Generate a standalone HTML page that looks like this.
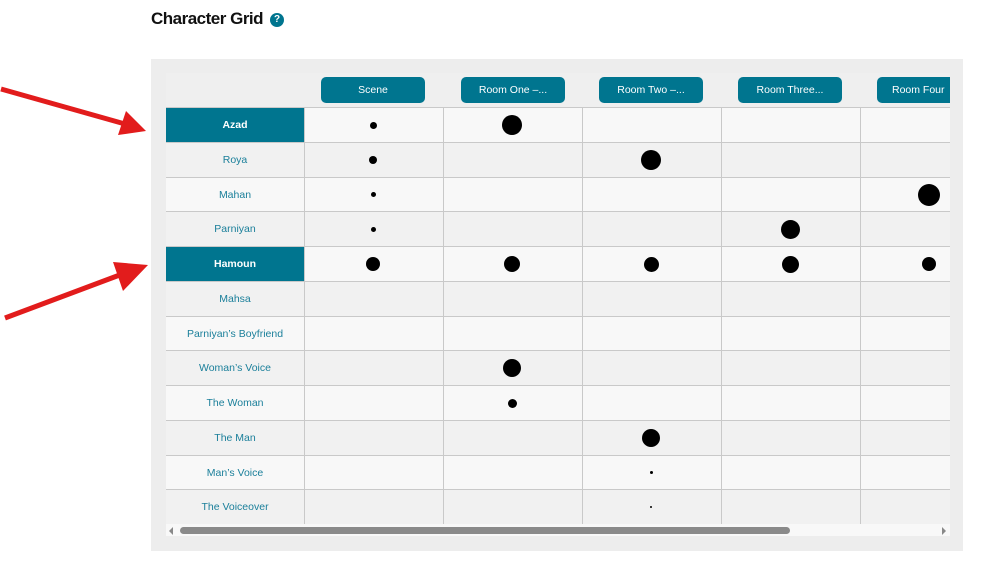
<!DOCTYPE html>
<html><head><style>
body{margin:0;width:1000px;height:574px;background:#fff;font-family:"Liberation Sans",sans-serif;position:relative;overflow:hidden}
.t{position:absolute;left:151px;top:9px;font-size:17px;font-weight:bold;color:#111;letter-spacing:-0.5px}
.q{position:absolute;left:270px;top:13px;width:14px;height:14px;border-radius:50%;background:#00758f;color:#fff;font-size:10px;font-weight:bold;text-align:center;line-height:14px}
.panel{position:absolute;left:151px;top:59px;width:812px;height:492px;background:#ededed}
.grid{position:absolute;left:166px;top:73px;width:784px;height:451px;overflow:hidden;background:#efefef}
.btn{position:absolute;top:4px;width:104px;height:26px;border-radius:5px;background:#00758f;color:#fff;font-size:10.5px;line-height:26px;text-align:center;white-space:nowrap;overflow:hidden}
.row{position:absolute;left:0;width:784px;height:35px;border-top:1px solid #c9c9c9;box-sizing:border-box}
.cell{position:absolute;top:0;height:34px;border-left:1px solid #c9c9c9;box-sizing:border-box}
.nm{position:absolute;left:0;top:0;width:138px;height:34px;line-height:34px;text-align:center;font-size:10.5px;color:#1a7f9a}
.nm.h{background:#00758f;color:#fff;font-weight:bold}
.d{position:absolute;border-radius:50%;background:#000}
.sb{position:absolute;left:166px;top:524px;width:784px;height:12px;background:#f8f8f8}
</style></head><body>
<div class="t">Character Grid</div><div class="q">?</div>
<div class="panel"></div>
<div class="grid" id="g">
<div class="btn" style="left:155px">Scene</div>
<div class="btn" style="left:295px">Room One –...</div>
<div class="btn" style="left:433px">Room Two –...</div>
<div class="btn" style="left:572px">Room Three...</div>
<div class="btn" style="left:711px;width:73px;border-radius:5px 0 0 5px;text-align:left;padding-left:15px;box-sizing:border-box">Room Four</div>
</div>
<div class="sb">
<div style="position:absolute;left:3px;top:3px;width:0;height:0;border-top:4px solid transparent;border-bottom:4px solid transparent;border-right:4px solid #888"></div>
<div style="position:absolute;left:14px;top:3px;width:610px;height:7px;border-radius:4px;background:#8a8a8a"></div>
<div style="position:absolute;left:776px;top:3px;width:0;height:0;border-top:4px solid transparent;border-bottom:4px solid transparent;border-left:4px solid #888"></div>
</div>
<svg style="position:absolute;left:0;top:0" width="170" height="340">
<line x1="1" y1="89" x2="125" y2="124" stroke="#e21c1c" stroke-width="5"/>
<polygon points="146,131 118,135 126,111" fill="#e21c1c"/>
<line x1="5" y1="318" x2="125" y2="273" stroke="#e21c1c" stroke-width="5"/>
<polygon points="148,265 113,262 123,291" fill="#e21c1c"/>
</svg>
<script>
var names=["Azad","Roya","Mahan","Parniyan","Hamoun","Mahsa","Parniyan’s Boyfriend","Woman’s Voice","The Woman","The Man","Man’s Voice","The Voiceover"];
var dots={0:[[0,7],[1,20]],1:[[0,8],[2,20]],2:[[0,5],[4,22]],3:[[0,5],[3,19]],4:[[0,14],[1,16],[2,15],[3,17],[4,14]],7:[[1,18]],8:[[1,9]],9:[[2,18]],10:[[2,3]],11:[[2,2]]};
var g=document.getElementById('g'),h='';
var cx=[207,346,485,624,763];
for(var i=0;i<12;i++){
 var y=34+i*34.75;
 h+='<div class="row" style="top:'+y+'px;background:'+(i%2?'#f1f1f1':'#f8f8f8')+'">';
 h+='<div class="nm'+(i==0||i==4?' h':'')+'">'+names[i]+'</div>';
 for(var c=0;c<5;c++)h+='<div class="cell" style="left:'+(138+c*139)+'px;width:139px"></div>';
 (dots[i]||[]).forEach(function(d){h+='<div class="d" style="left:'+(cx[d[0]]-d[1]/2)+'px;top:'+(17-d[1]/2)+'px;width:'+d[1]+'px;height:'+d[1]+'px"></div>'});
 h+='</div>';
}
g.innerHTML+=h;
</script>
</body></html>
